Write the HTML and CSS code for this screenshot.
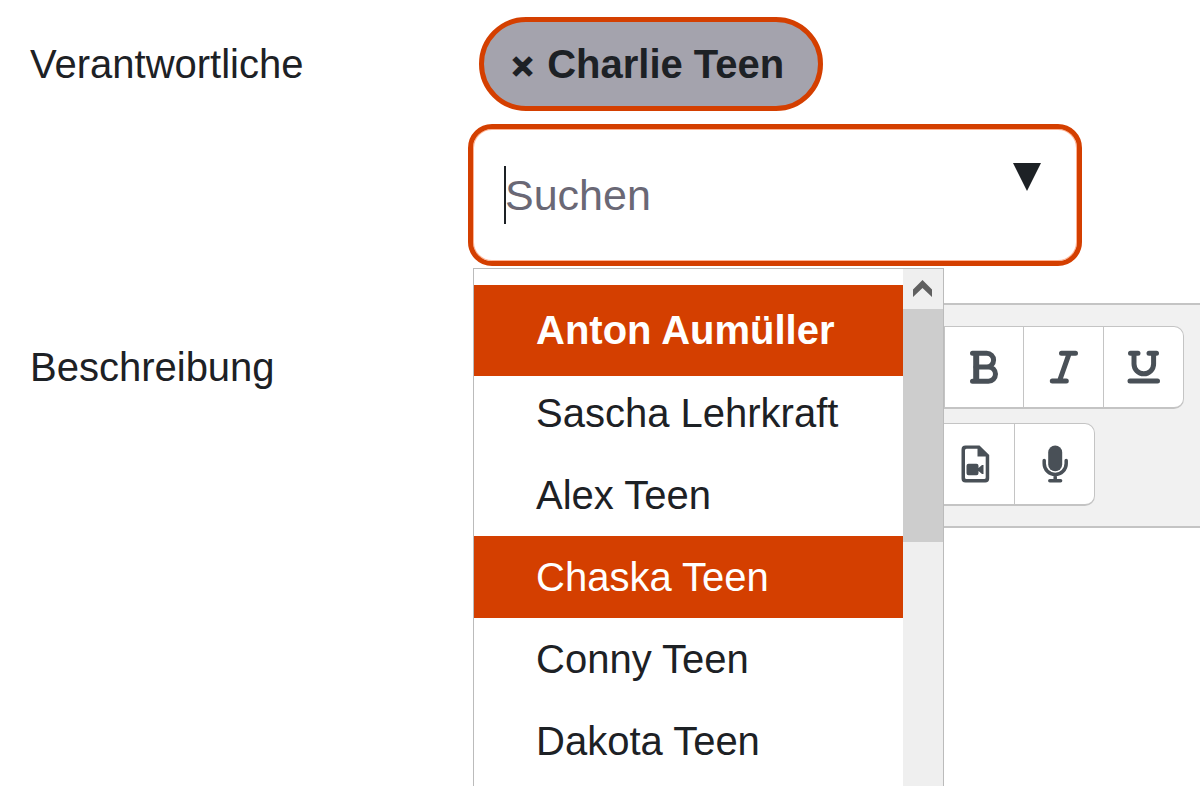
FILE: index.html
```html
<!DOCTYPE html>
<html lang="de">
<head>
<meta charset="utf-8">
<title>Verantwortliche</title>
<link rel="stylesheet" href="styles.css">
</head>
<body>
<form class="form">
  <label class="label" for="search">Verantwortliche</label>
  <div class="field">
    <button type="button" class="chip"><span class="chip-remove">×</span><span>Charlie Teen</span></button>
    <div class="combo">
      <input class="search" id="search" type="text" placeholder="Suchen" role="combobox" aria-expanded="true" aria-controls="people">
      <span class="caret"></span>
      <svg class="arrow" viewBox="0 0 28 28" aria-hidden="true"><path d="M0 0H28L14 28Z"/></svg>
      <div class="dropdown">
        <ul class="options" id="people" role="listbox">
          <li class="option selected" role="option" aria-selected="true">Anton Aumüller</li>
          <li class="option" role="option">Sascha Lehrkraft</li>
          <li class="option" role="option">Alex Teen</li>
          <li class="option active" role="option">Chaska Teen</li>
          <li class="option" role="option">Conny Teen</li>
          <li class="option" role="option">Dakota Teen</li>
        </ul>
        <div class="scrollbar" aria-hidden="true">
          <svg class="scroll-up" viewBox="0 0 39 40"><path d="M10 20.500 19.500 11 29 20.500V28L19.500 19 10 28Z"/></svg>
          <div class="thumb"></div>
        </div>
      </div>
    </div>
  </div>

  <span class="label" id="description-label">Beschreibung</span>
  <div class="editor" role="group" aria-labelledby="description-label">
    <div class="toolbar">
      <div class="group group-text">
        <button type="button" class="tool" aria-label="Fett"><svg class="icon" viewBox="0 0 40 40"><path class="line" d="M8.500 6.200H22.700a6.900 6.900 0 0 1 0 13.800H12M22.700 20h1.700a7.100 7.100 0 0 1 0 14.200H8.500"/><path class="line stem" d="M12.200 6.200V34.200"/></svg></button>
        <button type="button" class="tool" aria-label="Kursiv"><svg class="icon" viewBox="0 0 40 40"><path class="line" d="M17.500 6.200H31.500M8.300 34H22.300M25.300 6.200 15.500 34"/></svg></button>
        <button type="button" class="tool" aria-label="Unterstrichen"><svg class="icon" viewBox="0 0 40 40"><path class="line" d="M6.500 6.200h7.500M25 6.200h7.500M10 6.200V17a9.800 9.800 0 0 0 19.600 0V6.200M6 34H33.500"/></svg></button>
      </div>
      <div class="group">
        <button type="button" class="tool" aria-label="Video aufnehmen"><svg class="icon" viewBox="0 0 40 40"><path fill-rule="evenodd" d="M10.500 1.500H24.500L34.200 11V34.500a4 4 0 0 1-4 4H10.500a4 4 0 0 1-4-4V5.500a4 4 0 0 1 4-4ZM11.500 4.800a1.500 1.500 0 0 0-1.500 1.500V33.500a1.500 1.500 0 0 0 1.500 1.500H29.200a1.500 1.500 0 0 0 1.500-1.500V12.500H22.500V4.800Z"/><path d="M13.500 19.800H21.500a2 2 0 0 1 2 2v2.200l3.500-3h1.500V30H27l-3.500-3v2.200a2 2 0 0 1-2 2h-8a2 2 0 0 1-2-2v-7.400a2 2 0 0 1 2-2Z"/></svg></button>
        <button type="button" class="tool" aria-label="Audio aufnehmen"><svg class="icon" viewBox="0 0 40 40"><rect x="13.200" y="1.500" width="14" height="25.700" rx="7"/><path class="line thin" d="M9.200 16.500V19.500a11 11 0 0 0 22 0V16.500M20.200 31V36M14.800 36.800H25.600"/></svg></button>
      </div>
    </div>
  </div>
</form>
</body>
</html>
```
FILE: styles.css
```css
* {
  box-sizing: border-box;
}

body {
  margin: 0;
  min-height: 100vh;
  overflow: hidden;
  background: #fff;
  color: #1d2125;
  font: 40px/82px "Liberation Sans", Arial, sans-serif;
}

.form {
  display: grid;
  grid-template-columns: 438px 1fr;
  row-gap: 37px;
  padding-left: 30px;
}

.label {
  padding-top: 17px;
  line-height: 94px;
}

.field {
  padding-top: 17px;
}

.chip {
  display: flex;
  align-items: center;
  gap: 12px;
  height: 94px;
  margin: 0 0 13px 11px;
  padding: 0 34px 0 26px;
  border: 5px solid #d43f00;
  border-radius: 47px;
  background: #a4a3ad;
  color: #1d2125;
  font: bold 40px/1 "Liberation Sans", Arial, sans-serif;
}

.chip-remove {
  padding-top: 4px;
  font: bold 30px/1 "DejaVu Sans", sans-serif;
  -webkit-text-stroke: 2px #1d2125;
}

.combo {
  position: relative;
  max-width: 614px;
}

.search {
  display: block;
  width: 100%;
  height: 142px;
  padding: 0 80px 0 32px;
  border: 5px solid #d43f00;
  border-radius: 24px;
  outline: 0;
  box-shadow: inset 0 0 0 1px #ffb393;
  background: #fff;
  color: #1d2125;
  font: 43px "Liberation Sans", Arial, sans-serif;
}

.search::placeholder {
  color: #6a6875;
  opacity: 1;
}

.caret {
  position: absolute;
  top: 42px;
  left: 36px;
  width: 2px;
  height: 58px;
  background: #1d2125;
}

.arrow {
  position: absolute;
  top: 39px;
  right: 41px;
  width: 28px;
  height: 28px;
  fill: #1d2125;
}

.dropdown {
  position: absolute;
  z-index: 1;
  top: 144px;
  left: 5px;
  display: flex;
  width: 471px;
  height: calc(100vh - 268px);
  border: 1px solid #bbb;
  border-bottom: 0;
  background: #fff;
}

.options {
  flex: 1;
  margin: 0;
  padding: 16px 0 0;
  list-style: none;
}

.option {
  padding-left: 62px;
}

.selected,
.active {
  background: #d43f00;
  color: #fff;
}

.selected {
  margin-bottom: -4px;
  font-weight: bold;
  line-height: 91px;
}

.scrollbar {
  width: 40px;
  background: #efefef;
}

.scroll-up {
  display: block;
  width: 39px;
  height: 40px;
  fill: #606060;
}

.thumb {
  height: 233px;
  background: #cdcdcd;
}

.editor {
  min-height: 483px;
  margin-left: 11px;
  border-top: 2px solid #c4c4c4;
}

.toolbar {
  display: grid;
  gap: 14px;
  justify-content: start;
  padding: 21px 0 20px 456px;
  border-bottom: 2px solid #c4c4c4;
  background: #f1f1f1;
}

.group {
  display: flex;
  justify-self: start;
  border: 1px solid #c4c4c4;
  border-bottom-width: 2px;
  border-radius: 0 10px 10px 0;
  background: #fff;
}

.group-text {
  margin-left: 9px;
}

.tool {
  display: grid;
  place-items: center;
  width: 78px;
  height: 80px;
  padding: 0;
  border: 0;
  background: none;
}

.tool + .tool {
  width: 80px;
  border-left: 1px solid #c4c4c4;
}

.icon {
  width: 40px;
  height: 40px;
  fill: #495057;
}

.line {
  fill: none;
  stroke: #495057;
  stroke-width: 5;
  stroke-linecap: round;
  stroke-linejoin: round;
}

.stem {
  stroke-width: 6;
  stroke-linecap: butt;
}

.thin {
  stroke-width: 3.500;
}
```
